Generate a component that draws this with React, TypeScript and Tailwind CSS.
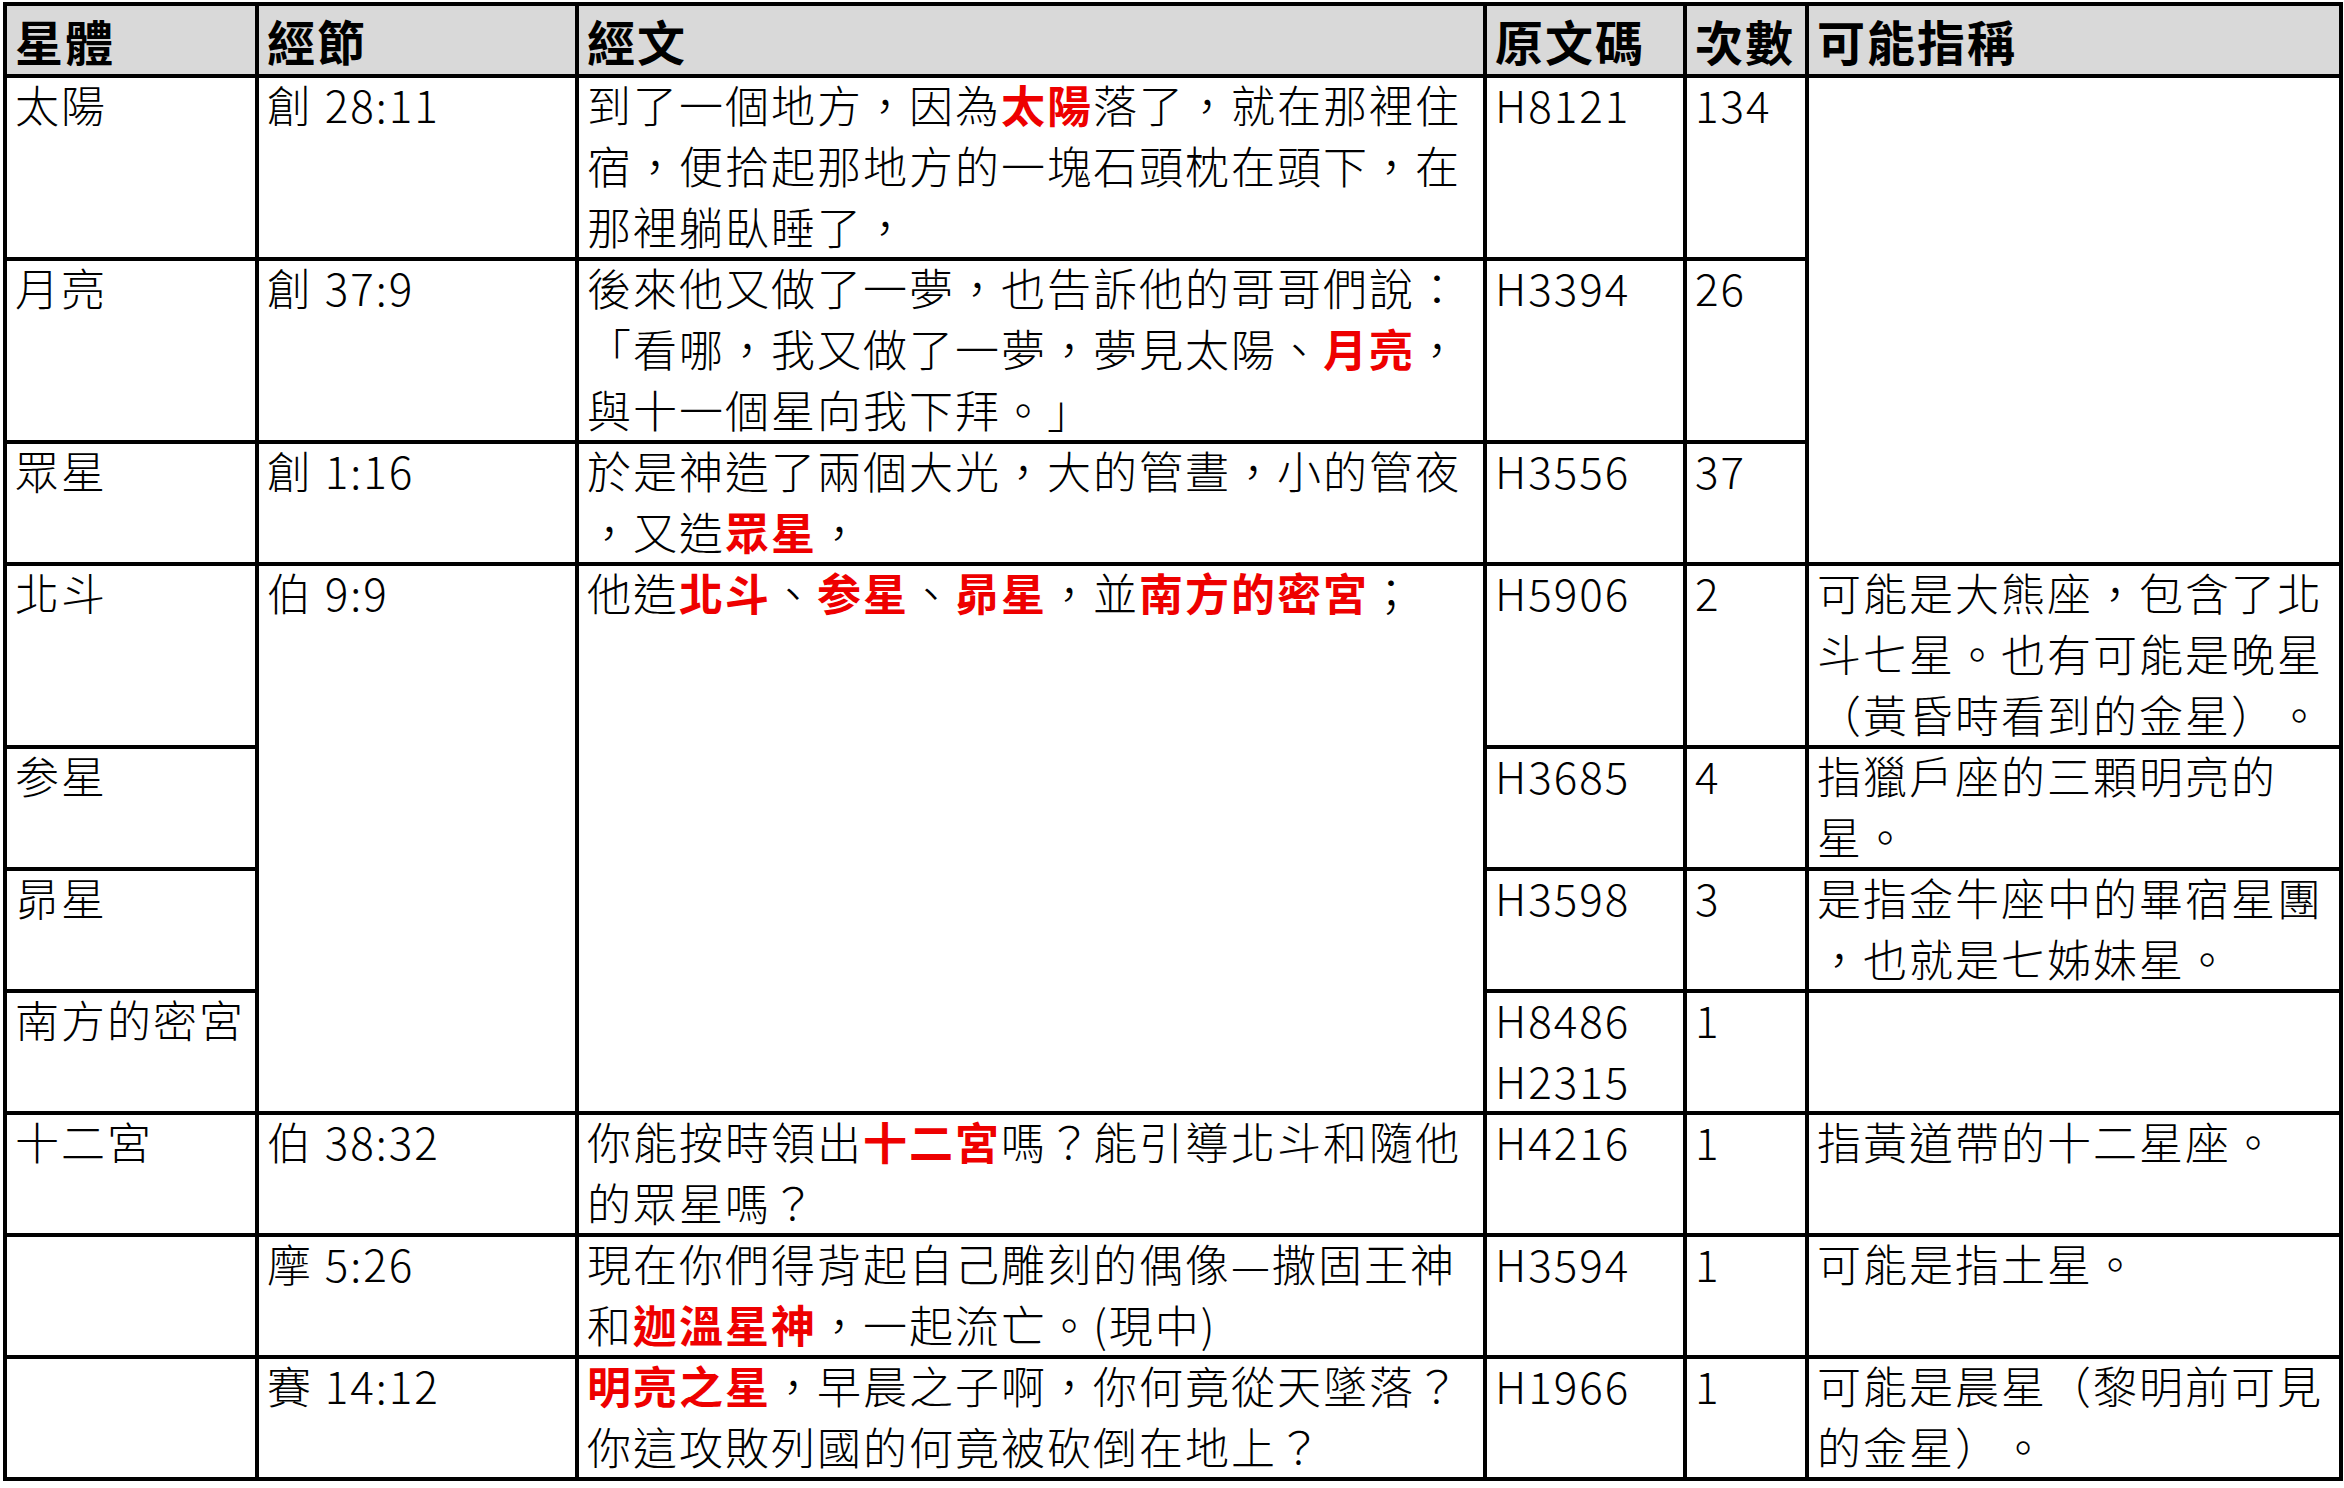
const ROW = [
  'row-start-1',
  'row-start-2',
  'row-start-3',
  'row-start-4',
  'row-start-5',
  'row-start-6',
  'row-start-7',
  'row-start-8',
  'row-start-9',
  'row-start-10',
  'row-start-11',
];
const COL = ['col-start-1', 'col-start-2', 'col-start-3', 'col-start-4', 'col-start-5', 'col-start-6'];
const SPAN: Record<number, string> = { 1: 'row-span-1', 3: 'row-span-3', 4: 'row-span-4' };

type Cell = { row: number; col: number; span?: number; lines: string[] };

const headers = ['星體', '經節', '經文', '原文碼', '次數', '可能指稱'];

// [xxx] marks the red, bold words
const cells: Cell[] = [
  { row: 2, col: 1, lines: ['太陽'] },
  { row: 2, col: 2, lines: ['創 28:11'] },
  {
    row: 2,
    col: 3,
    lines: ['到了一個地方，因為[太陽]落了，就在那裡住', '宿，便拾起那地方的一塊石頭枕在頭下，在', '那裡躺臥睡了，'],
  },
  { row: 2, col: 4, lines: ['H8121'] },
  { row: 2, col: 5, lines: ['134'] },
  { row: 2, col: 6, span: 3, lines: [] },

  { row: 3, col: 1, lines: ['月亮'] },
  { row: 3, col: 2, lines: ['創 37:9'] },
  {
    row: 3,
    col: 3,
    lines: ['後來他又做了一夢，也告訴他的哥哥們說：', '「看哪，我又做了一夢，夢見太陽、[月亮]，', '與十一個星向我下拜。」'],
  },
  { row: 3, col: 4, lines: ['H3394'] },
  { row: 3, col: 5, lines: ['26'] },

  { row: 4, col: 1, lines: ['眾星'] },
  { row: 4, col: 2, lines: ['創 1:16'] },
  { row: 4, col: 3, lines: ['於是神造了兩個大光，大的管晝，小的管夜', '，又造[眾星]，'] },
  { row: 4, col: 4, lines: ['H3556'] },
  { row: 4, col: 5, lines: ['37'] },

  { row: 5, col: 1, lines: ['北斗'] },
  { row: 5, col: 2, span: 4, lines: ['伯 9:9'] },
  { row: 5, col: 3, span: 4, lines: ['他造[北斗]、[参星]、[昴星]，並[南方的密宮]；'] },
  { row: 5, col: 4, lines: ['H5906'] },
  { row: 5, col: 5, lines: ['2'] },
  { row: 5, col: 6, lines: ['可能是大熊座，包含了北', '斗七星。也有可能是晚星', '（黃昏時看到的金星）。'] },

  { row: 6, col: 1, lines: ['参星'] },
  { row: 6, col: 4, lines: ['H3685'] },
  { row: 6, col: 5, lines: ['4'] },
  { row: 6, col: 6, lines: ['指獵戶座的三顆明亮的', '星。'] },

  { row: 7, col: 1, lines: ['昴星'] },
  { row: 7, col: 4, lines: ['H3598'] },
  { row: 7, col: 5, lines: ['3'] },
  { row: 7, col: 6, lines: ['是指金牛座中的畢宿星團', '，也就是七姊妹星。'] },

  { row: 8, col: 1, lines: ['南方的密宮'] },
  { row: 8, col: 4, lines: ['H8486', 'H2315'] },
  { row: 8, col: 5, lines: ['1'] },
  { row: 8, col: 6, lines: [] },

  { row: 9, col: 1, lines: ['十二宮'] },
  { row: 9, col: 2, lines: ['伯 38:32'] },
  { row: 9, col: 3, lines: ['你能按時領出[十二宮]嗎？能引導北斗和隨他', '的眾星嗎？'] },
  { row: 9, col: 4, lines: ['H4216'] },
  { row: 9, col: 5, lines: ['1'] },
  { row: 9, col: 6, lines: ['指黃道帶的十二星座。'] },

  { row: 10, col: 1, lines: [] },
  { row: 10, col: 2, lines: ['摩 5:26'] },
  { row: 10, col: 3, lines: ['現在你們得背起自己雕刻的偶像—撒固王神', '和[迦溫星神]，一起流亡。(現中)'] },
  { row: 10, col: 4, lines: ['H3594'] },
  { row: 10, col: 5, lines: ['1'] },
  { row: 10, col: 6, lines: ['可能是指土星。'] },

  { row: 11, col: 1, lines: [] },
  { row: 11, col: 2, lines: ['賽 14:12'] },
  { row: 11, col: 3, lines: ['[明亮之星]，早晨之子啊，你何竟從天墜落？', '你這攻敗列國的何竟被砍倒在地上？'] },
  { row: 11, col: 4, lines: ['H1966'] },
  { row: 11, col: 5, lines: ['1'] },
  { row: 11, col: 6, lines: ['可能是晨星（黎明前可見', '的金星）。'] },
];

function Line({ text }: { text: string }) {
  const parts = text.split(/(\[[^\]]+\])/).filter(Boolean);
  return (
    <div className="whitespace-nowrap">
      {parts.map((p, i) =>
        p.startsWith('[') ? (
          <span key={i} className="font-bold text-[#ee0000]">
            {p.slice(1, -1)}
          </span>
        ) : (
          <span key={i}>{p}</span>
        ),
      )}
    </div>
  );
}

export default function App() {
  return (
    <div className="min-h-screen bg-white pt-[2px] pl-[3px] font-['Noto_Sans_CJK_TC',sans-serif] text-black [text-spacing-trim:space-all]">
      <div className="grid w-fit grid-cols-[248px_316px_904px_196px_118px_530px] gap-[4px] bg-black p-[4px]">
        {headers.map((h, i) => (
          <div
            key={h}
            className={`${ROW[0]} ${COL[i]} flex h-[68px] items-center bg-[#d9d9d9] px-[8px] text-[48px] leading-[68px] font-bold tracking-[2px]`}
          >
            {h}
          </div>
        ))}
        {cells.map((c) => (
          <div
            key={`${c.row}-${c.col}`}
            className={`${ROW[c.row - 1]} ${COL[c.col - 1]} ${SPAN[c.span ?? 1]} bg-white px-[8px] text-[44px] leading-[61px] font-light tracking-[2px]`}
          >
            <div className="-mt-[4px] min-h-[61px]">
              {c.lines.map((l, i) => (
                <Line key={i} text={l} />
              ))}
            </div>
          </div>
        ))}
      </div>
    </div>
  );
}
